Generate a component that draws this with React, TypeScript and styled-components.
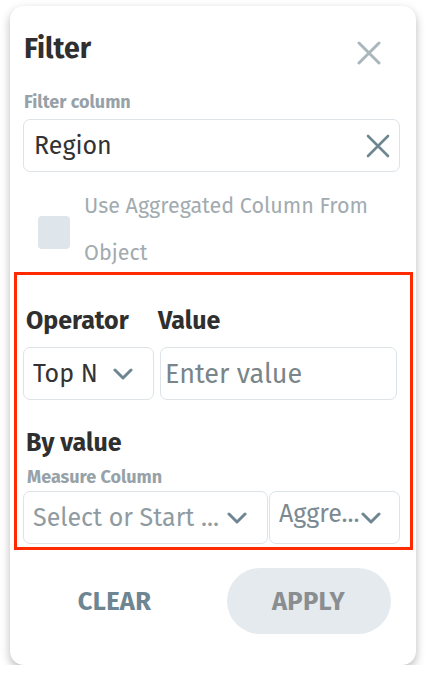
import styled, { createGlobalStyle } from 'styled-components'

const GlobalStyle = createGlobalStyle`
  html, body {
    margin: 0;
    background: #fff;
  }
  body {
    font-family: 'Fira Sans', 'Open Sans', 'Noto Sans', sans-serif;
    color: #333;
  }
`

const Page = styled.div`
  padding: 6px 0 0 10px;
`

const Card = styled.div`
  width: 406px;
  height: 659px;
  box-sizing: border-box;
  background: #fff;
  border-radius: 14px;
  box-shadow: 0 4px 10px rgba(0, 0, 0, 0.28);
  padding: 25px 16px 0 13px;
  display: flex;
  flex-direction: column;
`

const Header = styled.div`
  display: flex;
  justify-content: space-between;
  align-items: flex-start;
`

const Title = styled.h1`
  margin: 0 0 0 1px;
  font-size: 28.5px;
  line-height: 36px;
  font-weight: 700;
  color: #2f2f2f;
`

const IconButton = styled.button<{ $color: string; $mt?: number }>`
  border: 0;
  background: none;
  padding: 0;
  width: 24px;
  height: 24px;
  margin: ${(p) => p.$mt ?? 0}px 19px 0 0;
  color: ${(p) => p.$color};
  display: flex;
`

const SmallLabel = styled.div<{ $mt: number; $pl?: number }>`
  margin-top: ${(p) => p.$mt}px;
  padding-left: ${(p) => p.$pl ?? 1}px;
  font-size: 18px;
  line-height: 20px;
  font-weight: 700;
  color: #97a2a8;
`

const Field = styled.div<{ $pl?: number }>`
  box-sizing: border-box;
  height: 53px;
  border: 1px solid #dde3e6;
  border-radius: 7px;
  background: #fff;
  display: flex;
  align-items: center;
  padding: 0 9px 0 ${(p) => p.$pl ?? 10}px;
  font-size: 25px;
  color: #333;
`

const FieldText = styled.span<{ $color?: string; $shift?: number; $size?: number }>`
  flex: 1;
  white-space: nowrap;
  overflow: hidden;
  color: ${(p) => p.$color ?? '#333'};
  font-size: ${(p) => (p.$size ? `${p.$size}px` : 'inherit')};
  position: relative;
  top: ${(p) => p.$shift ?? 0}px;
`

const ClearIcon = styled.span`
  display: flex;
  color: #6e8592;
`

const CheckRow = styled.label`
  display: flex;
  align-items: center;
  margin: 11px 0 -5px 0;
`

const CheckBox = styled.span`
  width: 32px;
  height: 33px;
  margin: 4px 14px 0 15px;
  border-radius: 4px;
  background: #dfe6eb;
  flex-shrink: 0;
`

const CheckText = styled.span`
  font-size: 21.5px;
  line-height: 47px;
  color: #a2abb0;
`

const Section = styled.section`
  margin: 0 -13px 0 -9px;
  border: 3px solid #ff2a00;
  padding: 31px 10px 0 6px;
  height: 278px;
  box-sizing: border-box;
`

const Grid = styled.div<{ $cols: string; $gap: number }>`
  display: grid;
  grid-template-columns: ${(p) => p.$cols};
  column-gap: ${(p) => p.$gap}px;
`

const Heading = styled.div<{ $mt?: number; $pl?: number }>`
  margin-top: ${(p) => p.$mt ?? 0}px;
  padding-left: ${(p) => p.$pl ?? 3}px;
  font-size: 25px;
  line-height: 30px;
  font-weight: 700;
  color: #2f2f2f;
`

const Select = styled(Field)<{ $pr?: number }>`
  padding: 0 ${(p) => p.$pr ?? 20}px 0 9px;
`

const SelectRow = styled(Grid)`
  margin-top: 11px;
`

const Actions = styled.div`
  display: flex;
  justify-content: center;
  gap: 30px;
  margin-top: 18px;
`

const ActionButton = styled.button<{ $filled?: boolean }>`
  width: 164px;
  height: 66px;
  border: 0;
  border-radius: 33px;
  background: ${(p) => (p.$filled ? '#e4eaee' : 'transparent')};
  color: ${(p) => (p.$filled ? '#8a8e90' : '#6e8592')};
  font-family: inherit;
  font-size: 25.5px;
  font-weight: 700;
  letter-spacing: 0.3px;
`

const Cross = ({ size = 24, stroke = 3 }: { size?: number; stroke?: number }) => (
  <svg width={size} height={size} viewBox="0 0 24 24" fill="none">
    <path d="M2 2L22 22M22 2L2 22" stroke="currentColor" strokeWidth={stroke} strokeLinecap="round" />
  </svg>
)

const Chevron = () => (
  <svg width="20" height="12" viewBox="0 0 20 12" fill="none" style={{ flexShrink: 0 }}>
    <path d="M2 2L10 10L18 2" stroke="#6e8592" strokeWidth="3" strokeLinecap="round" strokeLinejoin="round" />
  </svg>
)

export default function App() {
  return (
    <Page>
      <GlobalStyle />
      <Card>
        <Header>
          <Title>Filter</Title>
          <IconButton $color="#a9b7bd" $mt={10}>
            <Cross stroke={3} />
          </IconButton>
        </Header>

        <SmallLabel $mt={25}>Filter column</SmallLabel>
        <Field style={{ marginTop: 7 }}>
          <FieldText>Region</FieldText>
          <ClearIcon>
            <Cross stroke={2.6} />
          </ClearIcon>
        </Field>

        <CheckRow>
          <CheckBox />
          <CheckText>
            Use Aggregated Column From
            <br />
            Object
          </CheckText>
        </CheckRow>

        <Section>
          <Grid $cols="131px 237px" $gap={6}>
            <Heading>Operator</Heading>
            <Heading $pl={0} style={{ marginLeft: -2 }}>
              Value
            </Heading>
          </Grid>
          <SelectRow $cols="131px 237px" $gap={6}>
            <Select>
              <FieldText>Top N</FieldText>
              <Chevron />
            </Select>
            <Field $pl={4}>
              <FieldText $color="#7a858a" $size={27}>
                Enter value
              </FieldText>
            </Field>
          </SelectRow>

          <Heading $mt={28}>By value</Heading>
          <SmallLabel $mt={9} $pl={4}>
            Measure Column
          </SmallLabel>
          <Grid $cols="245px 131px" $gap={1} style={{ marginTop: 4 }}>
            <Select>
              <FieldText $color="#8f9ba1">Select or Start ...</FieldText>
              <Chevron />
            </Select>
            <Select $pr={18}>
              <FieldText $color="#7b8a92" $shift={-4}>
                Aggre...
              </FieldText>
              <Chevron />
            </Select>
          </Grid>
        </Section>

        <Actions>
          <ActionButton>CLEAR</ActionButton>
          <ActionButton $filled>APPLY</ActionButton>
        </Actions>
      </Card>
    </Page>
  )
}
